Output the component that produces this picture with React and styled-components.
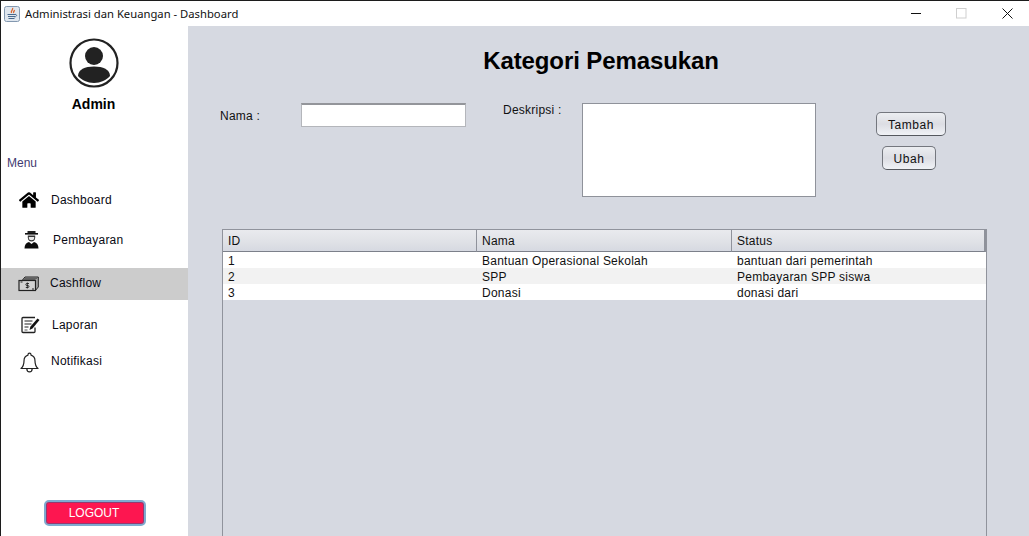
import React from "react";
import styled, { createGlobalStyle } from "styled-components";
import { FaHome } from "react-icons/fa";

const GlobalStyle = createGlobalStyle`
  html, body {
    margin: 0;
    padding: 0;
    background: #fff;
    overflow: hidden;
  }
  * {
    box-sizing: border-box;
  }
`;

const Window = styled.div`
  width: 1029px;
  height: 536px;
  display: flex;
  flex-direction: column;
  overflow: hidden;
  border-top: 1px solid #1c1c1c;
  border-left: 1px solid #1c1c1c;
  font-family: "Liberation Sans", Arial, sans-serif;
  font-size: 12px;
  letter-spacing: 0.24px;
  color: #000;
`;

const TitleBar = styled.div`
  height: 25px;
  flex: none;
  display: flex;
  align-items: center;
  padding-left: 3px;
  background: #fff;
`;

const TitleText = styled.span`
  margin-left: 5px;
  font-family: "Noto Sans", "Open Sans", sans-serif;
  font-size: 11.25px;
  letter-spacing: 0;
  color: #111;
`;

const WindowControls = styled.div`
  margin-left: auto;
  margin-right: -1px;
  display: flex;
  height: 100%;
`;

const ControlButton = styled.div`
  width: 46px;
  height: 100%;
  display: flex;
  align-items: center;
  justify-content: center;
`;

const Body = styled.div`
  flex: 1;
  min-height: 0;
  display: flex;
`;

const Sidebar = styled.aside`
  width: 187px;
  flex: none;
  display: flex;
  flex-direction: column;
  background: #fff;
`;

const Profile = styled.div`
  display: flex;
  flex-direction: column;
  align-items: center;
  padding: 12px 2px 0 0;
  height: 129px;
`;

const AdminName = styled.div`
  margin-top: 8px;
  font-size: 14px;
  font-weight: 700;
  line-height: 16px;
  letter-spacing: 0;
`;

const MenuLabel = styled.div`
  padding-left: 6px;
  height: 16px;
  line-height: 16px;
  letter-spacing: 0;
  color: #3f3a70;
`;

const NavItem = styled.div`
  display: flex;
  align-items: center;
  height: ${(p) => p.$height}px;
  margin-top: ${(p) => p.$top}px;
  padding-left: ${(p) => p.$indent}px;
  background: ${(p) => (p.$active ? "#cccccc" : "transparent")};
`;

const NavIcon = styled.span`
  width: ${(p) => p.$width}px;
  flex: none;
  display: flex;
  align-items: center;
  justify-content: flex-start;
  font-size: 20px;
  line-height: 0;
`;

const NavText = styled.span`
  color: #0a0a14;
  transform: translateY(${(p) => p.$shift || 0}px);
`;

const LogoutWrap = styled.div`
  margin-top: auto;
  padding: 0 0 10px 43px;
`;

const LogoutButton = styled.button`
  display: block;
  width: 102px;
  height: 26px;
  padding: 0 2px 0 0;
  border: 2px solid #7fabd0;
  border-radius: 5px;
  box-shadow: inset 0 0 0 1px rgba(60, 90, 140, 0.55);
  background: #fd1650;
  color: #fff;
  font-family: inherit;
  font-size: 12px;
  letter-spacing: 0;
`;

const Main = styled.main`
  flex: 1;
  min-width: 0;
  overflow: hidden;
  background: #d6d9e1;
`;

const PageTitle = styled.h1`
  margin: 0;
  padding: 20px 15px 0 0;
  height: 77px;
  text-align: center;
  font-size: 24px;
  line-height: 29px;
  font-weight: 700;
  letter-spacing: -0.1px;
  color: #000;
`;

const FormRow = styled.div`
  display: flex;
  align-items: flex-start;
  height: 126px;
  padding-left: 32px;
`;

const FieldLabel = styled.label`
  flex: none;
  width: ${(p) => p.$width}px;
  padding-top: ${(p) => p.$top}px;
  padding-left: ${(p) => p.$indent || 0}px;
  line-height: 14px;
  color: #111;
`;

const TextInput = styled.div`
  width: 165px;
  height: 24px;
  flex: none;
  background: #fff;
  border: 1px solid #b4b6bb;
  border-top: 2px solid #93959a;
`;

const TextArea = styled.div`
  width: 234px;
  height: 94px;
  flex: none;
  background: #fff;
  border: 1px solid #8f929a;
`;

const ActionColumn = styled.div`
  display: flex;
  flex-direction: column;
  align-items: flex-start;
  gap: 10px;
  margin-left: 60px;
  padding-top: 9px;
`;

const ActionButton = styled.button`
  display: block;
  width: ${(p) => p.$width}px;
  height: 24px;
  margin-left: ${(p) => p.$left || 0}px;
  padding: 1px 0 0;
  border: 1px solid #74777e;
  border-bottom-color: #55585e;
  border-radius: 5px;
  background: linear-gradient(#eceef1 0%, #dcdde3 50%, #f0f2f6 100%);
  color: #111;
  font-family: inherit;
  font-size: 12px;
  letter-spacing: 0.55px;
`;

const TableFrame = styled.div`
  margin-left: 34px;
  width: 765px;
  height: 320px;
  border: 1px solid #90939c;
  border-bottom: none;
`;

const DataTable = styled.table`
  width: 100%;
  table-layout: fixed;
  border-collapse: separate;
  border-spacing: 0;
`;

const HeadCell = styled.th`
  height: 22px;
  width: ${(p) => p.$width}px;
  padding: 0 0 0 5px;
  text-align: left;
  font-weight: 400;
  color: #111;
  background: linear-gradient(#e9eaee 0%, #dfe1e6 60%, #d6d9e1 100%);
  border-bottom: 1px solid #7c808a;
  border-right: 1px solid #8f929b;

  &:last-child {
    border-right-width: 2px;
  }
`;

const Row = styled.tr`
  background: ${(p) => (p.$alt ? "#f2f2f2" : "#fff")};
`;

const Cell = styled.td`
  height: 16px;
  padding: 2px 0 0 5px;
  line-height: 14px;
  color: #111;
`;

const rows = [
  { id: 1, nama: "Bantuan Operasional Sekolah", status: "bantuan dari pemerintah" },
  { id: 2, nama: "SPP", status: "Pembayaran SPP siswa" },
  { id: 3, nama: "Donasi", status: "donasi dari" },
];

const JavaIcon = () => (
  <svg width="16" height="16" viewBox="0 0 16 16">
    <rect x="0.5" y="0.5" width="15" height="15" rx="2" fill="#dfe6ee" stroke="#8398b0" />
    <path d="M8.500 2c1.200 1.600-2.200 2.600-1 5M10.300 4c.5 1.100-1.500 1.600-.5 3" fill="none" stroke="#d9622a" strokeWidth="1.300" />
    <path d="M3.500 8.500h7.500M4 10.500h7M4.500 12.500h6" stroke="#48688c" strokeWidth="1.100" />
    <path d="M11 8.300c2.200 0 2.200 2.200-.5 2.700" fill="none" stroke="#48688c" />
  </svg>
);

const AvatarIcon = () => (
  <svg width="50" height="50" viewBox="0 0 50 50">
    <circle cx="25" cy="25" r="23.500" fill="#fff" stroke="#222" strokeWidth="2.200" />
    <circle cx="25" cy="18" r="9" fill="#222" />
    <path d="M9 38c0-6.500 7-9.500 16-9.500S41 31.500 41 38c-3.500 4-9.500 7-16 7S12.500 42 9 38z" fill="#222" />
  </svg>
);

const GraduateIcon = () => (
  <svg width="15" height="18" viewBox="0 0 15 18">
    <path d="M1 2h13v1.600H1z" fill="#111" />
    <path d="M3.500 0h8v2h-8z" fill="#222" />
    <path d="M3.800 4.500h7.400v2.200c0 2.300-1.600 3.800-3.700 3.800S3.800 9 3.800 6.700z" fill="#333" />
    <path d="M4.800 6h5.400v1.300c0 1.200-1.100 2-2.700 2s-2.700-.8-2.700-2z" fill="#e8e8e8" />
    <path d="M.5 17.500c0-3.800 1.800-5.800 4.500-6.500l2.500 2 2.500-2c2.700.7 4.500 2.700 4.500 6.500z" fill="#0c0c0c" />
  </svg>
);

const CashIcon = () => (
  <svg width="21" height="16" viewBox="0 0 21 16">
    <path d="M4.500 4 7 1h13.300v10l-2.500 3" fill="#a8a8a8" stroke="#222" strokeWidth="1" />
    <path d="M6.500 2.500h12.500M5.500 3.500h12" stroke="#444" strokeWidth="0.700" />
    <rect x="1" y="4.500" width="16.500" height="10" fill="#d2d2d2" stroke="#222" strokeWidth="1.200" />
    <path d="M11 7.500H8.600c-1 0-1 2 0 2h1.600c1 0 1 2 0 2H7.800M9.300 6.500v6" fill="none" stroke="#222" strokeWidth="0.900" />
    <path d="M2.500 6h2M14 13h2" stroke="#222" />
  </svg>
);

const ReportIcon = () => (
  <svg width="19" height="18" viewBox="0 0 19 18">
    <path d="M14 1.500H2c-.6 0-1 .4-1 1v13c0 .6.400 1 1 1h11c.600 0 1-.4 1-1v-4" fill="none" stroke="#222" strokeWidth="1.300" />
    <path d="M3.500 5h8M3.500 8h7M3.500 11h4" stroke="#222" strokeWidth="1.200" />
    <path d="M16.500 2.500 18.500 4 11.500 12.500 8.500 14l.8-3.300z" fill="#111" />
    <path d="M3.500 14h3" stroke="#555" />
  </svg>
);

const BellIcon = () => (
  <svg width="19" height="21" viewBox="0 0 19 21">
    <path d="M9.500 1.200c.9 0 1.500.6 1.500 1.500v.5c2.700.8 4 3 4 5.800 0 3.500.7 5.500 3 7.500H1c2.300-2 3-4 3-7.500 0-2.800 1.300-5 4-5.800v-.5c0-.9.600-1.500 1.500-1.500z" fill="#fff" stroke="#222" strokeWidth="1.200" strokeLinejoin="round" />
    <path d="M6.800 16.500c0 2 1.200 3.300 2.700 3.300s2.700-1.300 2.700-3.300" fill="none" stroke="#222" strokeWidth="1.200" />
  </svg>
);

const App = () => {
  return (
    <Window>
      <GlobalStyle />
      <TitleBar>
        <JavaIcon />
        <TitleText>Administrasi dan Keuangan - Dashboard</TitleText>
        <WindowControls>
          <ControlButton>
            <svg width="11" height="11" viewBox="0 0 11 11">
              <path d="M1 5.500h10" stroke="#111" strokeWidth="1" />
            </svg>
          </ControlButton>
          <ControlButton>
            <svg width="11" height="11" viewBox="0 0 11 11">
              <rect x="0.500" y="0.500" width="9.500" height="9.500" fill="none" stroke="#cfcfcf" />
            </svg>
          </ControlButton>
          <ControlButton>
            <svg width="11" height="11" viewBox="0 0 11 11">
              <path d="M0.500 0.500l10 10M10.500 0.500l-10 10" stroke="#111" strokeWidth="1" />
            </svg>
          </ControlButton>
        </WindowControls>
      </TitleBar>
      <Body>
        <Sidebar>
          <Profile>
            <AvatarIcon />
            <AdminName>Admin</AdminName>
          </Profile>
          <MenuLabel>Menu</MenuLabel>
          <NavItem $height={24} $top={17} $indent={18}>
            <NavIcon $width={32}>
              <FaHome />
            </NavIcon>
            <NavText>Dashboard</NavText>
          </NavItem>
          <NavItem $height={24} $top={16} $indent={23}>
            <NavIcon $width={29}>
              <GraduateIcon />
            </NavIcon>
            <NavText>Pembayaran</NavText>
          </NavItem>
          <NavItem $active $height={32} $top={16} $indent={17}>
            <NavIcon $width={32}>
              <CashIcon />
            </NavIcon>
            <NavText $shift={-1}>Cashflow</NavText>
          </NavItem>
          <NavItem $height={24} $top={13} $indent={20}>
            <NavIcon $width={31}>
              <ReportIcon />
            </NavIcon>
            <NavText>Laporan</NavText>
          </NavItem>
          <NavItem $height={24} $top={13} $indent={19}>
            <NavIcon $width={31}>
              <BellIcon />
            </NavIcon>
            <NavText $shift={-1}>Notifikasi</NavText>
          </NavItem>
          <LogoutWrap>
            <LogoutButton>LOGOUT</LogoutButton>
          </LogoutWrap>
        </Sidebar>
        <Main>
          <PageTitle>Kategori Pemasukan</PageTitle>
          <FormRow>
            <FieldLabel $width={81} $top={6}>Nama :</FieldLabel>
            <TextInput />
            <FieldLabel $width={116} $top={0} $indent={37}>Deskripsi :</FieldLabel>
            <TextArea />
            <ActionColumn>
              <ActionButton $width={70}>Tambah</ActionButton>
              <ActionButton $width={54} $left={6}>Ubah</ActionButton>
            </ActionColumn>
          </FormRow>
          <TableFrame>
            <DataTable>
              <thead>
                <tr>
                  <HeadCell $width={254}>ID</HeadCell>
                  <HeadCell $width={255}>Nama</HeadCell>
                  <HeadCell>Status</HeadCell>
                </tr>
              </thead>
              <tbody>
                {rows.map((item, i) => (
                  <Row key={item.id} $alt={i % 2 === 1}>
                    <Cell>{item.id}</Cell>
                    <Cell>{item.nama}</Cell>
                    <Cell>{item.status}</Cell>
                  </Row>
                ))}
              </tbody>
            </DataTable>
          </TableFrame>
        </Main>
      </Body>
    </Window>
  );
};

export default App;
